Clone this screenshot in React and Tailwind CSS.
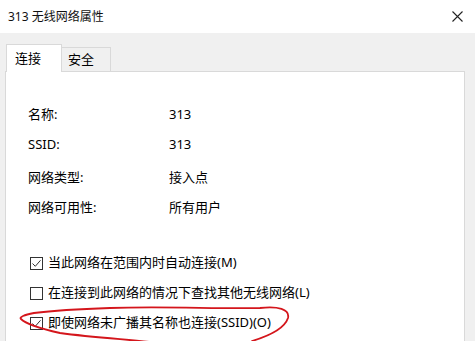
import React from 'react';

const font = { fontFamily: '"Segoe UI", "Noto Sans", "Noto Sans CJK SC", sans-serif' };

const rows = [
  { label: '名称:', value: '313', mt: 'mt-[33px]' },
  { label: 'SSID:', value: '313', mt: 'mt-[10px]' },
  { label: '网络类型:', value: '接入点', mt: 'mt-[13px]' },
  { label: '网络可用性:', value: '所有用户', mt: 'mt-[10px]' },
];

const checks = [
  { text: '当此网络在范围内时自动连接(M)', checked: true, mt: 'mt-[35px]' },
  { text: '在连接到此网络的情况下查找其他无线网络(L)', checked: false, mt: 'mt-[10px]' },
  { text: '即使网络未广播其名称也连接(SSID)(O)', checked: true, mt: 'mt-[10px]' },
];

const CheckBox = ({ checked }) => (
  <div className="w-[13px] h-[13px] border border-[#333] bg-white flex items-center justify-center shrink-0">
    {checked && (
      <svg width="11" height="11" viewBox="0 0 11 11">
        <path d="M1.5 5.5 L4.3 8.3 L9.5 2.3" fill="none" stroke="#333" strokeWidth="1" />
      </svg>
    )}
  </div>
);

export default function App() {
  return (
    <div className="relative w-[475px] h-[341px] overflow-hidden bg-[#f0f0f0] text-[#000]" style={font}>
      {/* title bar */}
      <div className="h-[33px] bg-white flex items-center justify-between pl-2 pr-[12px]">
        <span className="text-[12px] text-[#111]">313 无线网络属性</span>
        <svg width="11" height="11" viewBox="0 0 11 11">
          <path d="M0.5 0.5 L10.5 10.5 M10.5 0.5 L0.5 10.5" stroke="#222" strokeWidth="1.1" />
        </svg>
      </div>

      {/* tabs */}
      <div className="flex items-end pl-[6px] pt-[10px] h-[38px]">
        <div className="relative z-10 h-[28px] w-[56px] bg-white border border-b-0 border-[#d9d9d9] flex items-center pl-[8px] text-[13px] -mb-px">
          连接
        </div>
        <div className="h-[24px] w-[49px] bg-[#f0f0f0] border border-l-0 border-b-0 border-[#d9d9d9] flex items-center pl-[6px] text-[13px]">
          安全
        </div>
      </div>

      {/* panel */}
      <div className="ml-[5px] w-[460px] h-[290px] bg-white border border-[#d9d9d9]">
        <div className="flex flex-col pl-[22px] text-[13px]">
          {rows.map((r) => (
            <div key={r.label} className={`flex items-center h-[20px] ${r.mt}`}>
              <span className="w-[141px]">{r.label}</span>
              <span>{r.value}</span>
            </div>
          ))}
          {checks.map((c) => (
            <div key={c.text} className={`flex items-center gap-[5px] h-[20px] pl-[2px] ${c.mt}`}>
              <CheckBox checked={c.checked} />
              <span>{c.text}</span>
            </div>
          ))}
        </div>
      </div>

      {/* red hand-drawn annotation */}
      <svg className="absolute left-0 top-0 pointer-events-none" width="475" height="341" viewBox="0 0 475 341">
        <path
          d="M252 341 C272 335 285 327 288 318 C290 309 278 306 260 308 C220 309 160 306 110 308 C80 309 50 311 34 313 C24 315 19 317 21 319 C26 324 38 328 60 333 C90 337 120 339 150 342"
          fill="none"
          stroke="#d4161c"
          strokeWidth="1.8"
          strokeLinecap="round"
        />
      </svg>
    </div>
  );
}
